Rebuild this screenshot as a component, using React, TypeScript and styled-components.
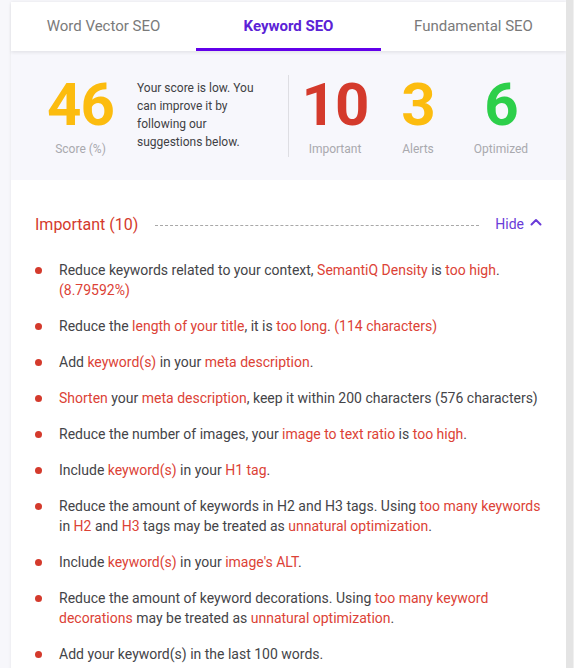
import styled, { createGlobalStyle } from 'styled-components'
import React from 'react'

const GlobalStyle = createGlobalStyle`
    html, body {
        margin: 0;
        padding: 0;
        background: #f7f7fb;
        font-family: Roboto, "Liberation Sans", Arial, sans-serif;
        overflow: hidden;
    }
`

type Piece = string | { hl: string }

const items: Piece[][] = [
    ['Reduce keywords related to your context, ', { hl: 'SemantiQ Density' }, ' is ', { hl: 'too high' }, '. ', { hl: '(8.79592%)' }],
    ['Reduce the ', { hl: 'length of your title' }, ', it is ', { hl: 'too long' }, '. ', { hl: '(114 characters)' }],
    ['Add ', { hl: 'keyword(s)' }, ' in your ', { hl: 'meta description' }, '.'],
    [{ hl: 'Shorten' }, ' your ', { hl: 'meta description' }, ', keep it within 200 characters (576 characters)'],
    ['Reduce the number of images, your ', { hl: 'image to text ratio' }, ' is ', { hl: 'too high' }, '.'],
    ['Include ', { hl: 'keyword(s)' }, ' in your ', { hl: 'H1 tag' }, '.'],
    ['Reduce the amount of keywords in H2 and H3 tags. Using ', { hl: 'too many keywords' }, ' in ', { hl: 'H2' }, ' and ', { hl: 'H3' }, ' tags may be treated as ', { hl: 'unnatural optimization' }, '.'],
    ['Include ', { hl: 'keyword(s)' }, ' in your ', { hl: "image's ALT" }, '.'],
    ['Reduce the amount of keyword decorations. Using ', { hl: 'too many keyword decorations' }, ' may be treated as ', { hl: 'unnatural optimization' }, '.'],
    ['Add your keyword(s) in the last 100 words.'],
]

const stats = [
    { value: 10, label: 'Important', color: '#d43a2c' },
    { value: 3, label: 'Alerts', color: '#fcbc0f' },
    { value: 6, label: 'Optimized', color: '#2dcf4a' },
]

const tabs = ['Word Vector SEO', 'Keyword SEO', 'Fundamental SEO']

const App: React.FC = () => {
    return (
        <>
            <GlobalStyle />
            <Page>
                <Main>
                    <Card>
                        <Tabs>
                            {tabs.map((t, i) => (
                                <Tab key={t} $active={i === 1}>{t}</Tab>
                            ))}
                        </Tabs>
                        <ScorePanel>
                            <ScoreBlock>
                                <BigNumber $color="#fcbc0f">46</BigNumber>
                                <StatLabel>Score (%)</StatLabel>
                            </ScoreBlock>
                            <ScoreText>
                                Your score is low. You can improve it by following our suggestions below.
                            </ScoreText>
                            <Divider />
                            <Stats>
                                {stats.map(s => (
                                    <Stat key={s.label}>
                                        <BigNumber $color={s.color}>{s.value}</BigNumber>
                                        <StatLabel>{s.label}</StatLabel>
                                    </Stat>
                                ))}
                            </Stats>
                        </ScorePanel>
                        <Section>
                            <SectionHead>
                                <SectionTitle>Important (10)</SectionTitle>
                                <Dashes />
                                <HideButton>
                                    Hide
                                    <svg width="12" height="8" viewBox="0 0 12 8" fill="none">
                                        <path d="M1.5 6.5L6 2L10.5 6.5" stroke="currentColor" strokeWidth="2" strokeLinecap="round" strokeLinejoin="round" />
                                    </svg>
                                </HideButton>
                            </SectionHead>
                            <List>
                                {items.map((parts, i) => (
                                    <Item key={i}>
                                        <Dot />
                                        <ItemText>
                                            {parts.map((p, j) =>
                                                typeof p === 'string' ? <span key={j}>{p}</span> : <Hl key={j}>{p.hl}</Hl>
                                            )}
                                        </ItemText>
                                    </Item>
                                ))}
                            </List>
                        </Section>
                    </Card>
                </Main>
                <ScrollStrip />
            </Page>
        </>
    )
}

const Page = styled.div`
    display: flex;
    height: 668px;
`

const Main = styled.div`
    flex: 1;
    padding: 2px 0 0 11px;
    overflow: hidden;
`

const ScrollStrip = styled.div`
    width: 7px;
    background: #e4e4e4;
    border-right: 1px solid #f0f0f0;
`

const Card = styled.div`
    background: #fff;
    box-shadow: 0 0 3px rgba(0, 0, 0, 0.08);
    min-height: 700px;
`

const Tabs = styled.div`
    display: grid;
    grid-template-columns: repeat(3, 1fr);
    height: 49px;
    position: relative;
    z-index: 1;
    background: #fff;
    box-shadow: 0 2px 3px rgba(0, 0, 0, 0.07);
`

const Tab = styled.div<{ $active: boolean }>`
    display: flex;
    align-items: center;
    justify-content: center;
    font-size: 15px;
    padding-top: 2px;
    color: ${p => (p.$active ? '#5b22d6' : '#7a7a7a')};
    font-weight: ${p => (p.$active ? 700 : 400)};
    border-bottom: 3px solid ${p => (p.$active ? '#6200ea' : 'transparent')};
`

const ScorePanel = styled.div`
    display: flex;
    align-items: center;
    background: #f7f7fc;
    height: 129px;
    padding-left: 24px;
`

const ScoreBlock = styled.div`
    width: 91px;
    display: flex;
    flex-direction: column;
    align-items: center;
`

const BigNumber = styled.div<{ $color: string }>`
    color: ${p => p.$color};
    font-size: 60px;
    font-weight: 700;
    line-height: 60px;
    letter-spacing: -1px;
`

const StatLabel = styled.div`
    color: #a9a9ae;
    font-size: 12px;
    margin-top: 7px;
`

const ScoreText = styled.div`
    width: 128px;
    margin-left: 11px;
    font-size: 12px;
    line-height: 18px;
    color: #3f3f44;
    margin-top: -2px;
`

const Divider = styled.div`
    width: 1px;
    height: 82px;
    background: #dedee3;
    margin-left: 23px;
`

const Stats = styled.div`
    display: flex;
    margin-left: 10px;
    gap: 11px;
`

const Stat = styled.div`
    width: 72px;
    display: flex;
    flex-direction: column;
    align-items: center;
`

const Section = styled.div`
    padding: 34px 24px 0 24px;
`

const SectionHead = styled.div`
    display: flex;
    align-items: center;
    height: 20px;
`

const SectionTitle = styled.div`
    color: #d43a2c;
    font-size: 16px;
`

const Dashes = styled.div`
    flex: 1;
    border-top: 1px dashed #a8a8a8;
    margin: 2px 16px 0 17px;
`

const HideButton = styled.div`
    display: flex;
    align-items: center;
    gap: 6px;
    color: #6a3bd8;
    font-size: 14px;
    svg {
        margin-top: -4px;
    }
`

const List = styled.ul`
    list-style: none;
    margin: 26px 0 0 0;
    padding: 0;
    display: flex;
    flex-direction: column;
    gap: 16px;
`

const Item = styled.li`
    display: flex;
    align-items: flex-start;
`

const Dot = styled.span`
    flex: none;
    width: 7px;
    height: 7px;
    border-radius: 50%;
    background: #d43a2c;
    margin: 7px 17px 0 0;
`

const ItemText = styled.div`
    font-size: 14px;
    line-height: 20px;
    color: #444448;
`

const Hl = styled.span`
    color: #dc4236;
`

export default App
